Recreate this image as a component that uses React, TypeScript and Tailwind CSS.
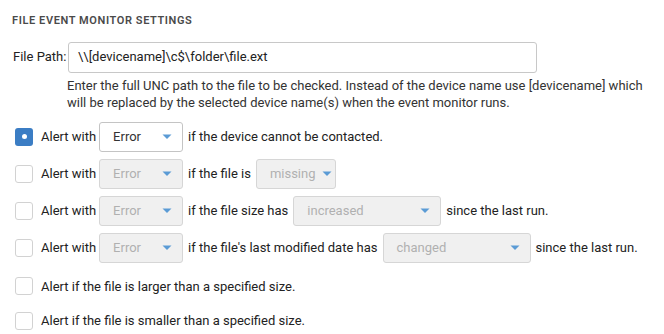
import React from "react";

const Caret = () => (
  <svg width="10" height="6" viewBox="0 0 10 6" className="shrink-0">
    <path d="M0.5 0.5 L9.5 0.5 L5 5 Z" fill="#5b9bd5" />
  </svg>
);

function Select({ value, width, disabled }: { value: string; width: number; disabled?: boolean }) {
  return (
    <div
      className={
        "flex h-[30px] items-center justify-between gap-[6px] rounded-[3px] border pl-[13px] pr-[10px] " +
        (disabled ? "border-[#d6d6d6] bg-[#f0f0f0] text-[#b0b0b0]" : "border-[#c4c4c4] bg-white text-[#333]")
      }
      style={{ width }}
    >
      <span>{value}</span>
      <Caret />
    </div>
  );
}

function Check({ checked }: { checked?: boolean }) {
  return checked ? (
    <div className="flex h-[18px] w-[18px] shrink-0 items-center justify-center rounded-[3px] bg-[#3b7dc4]">
      <div className="h-[5px] w-[5px] rounded-full bg-white" />
    </div>
  ) : (
    <div className="h-[18px] w-[18px] shrink-0 rounded-[3px] border border-[#d2d2d2] bg-white" />
  );
}

export default function App() {
  return (
    <div
      className="h-[334px] w-[664px] bg-white text-[13px] text-[#222]"
      style={{ fontFamily: "Roboto, 'Noto Sans', sans-serif" }}
    >
      <div className="pl-[12px] pt-[13px] text-[11px] font-semibold tracking-[0.6px] text-[#4a4a4a]">
        FILE EVENT MONITOR SETTINGS
      </div>
      <div className="mt-[12px] flex items-center pl-[13px]">
        <span className="w-[55px]">File Path:</span>
        <div className="flex h-[31px] w-[469px] items-center rounded-[3px] border border-[#c8c8c8] pl-[9px]">
          \\[devicename]\c$\folder\file.ext
        </div>
      </div>
      <div className="mt-[4px] pl-[67px] leading-[17px] text-[#333]">
        Enter the full UNC path to the file to be checked. Instead of the device name use [devicename] which
        <br />
        will be replaced by the selected device name(s) when the event monitor runs.
      </div>
      <div className="mt-[11px] flex flex-col gap-[7px] pl-[15px]">
        <div className="flex items-center">
          <Check checked />
          <span className="ml-[8px] mr-[3px]">Alert with</span>
          <Select value="Error" width={84} />
          <span className="ml-[5px]">if the device cannot be contacted.</span>
        </div>
        <div className="flex items-center">
          <Check />
          <span className="ml-[8px] mr-[3px]">Alert with</span>
          <Select value="Error" width={84} disabled />
          <span className="ml-[5px] mr-[5px]">if the file is</span>
          <Select value="missing" width={80} disabled />
        </div>
        <div className="flex items-center">
          <Check />
          <span className="ml-[8px] mr-[3px]">Alert with</span>
          <Select value="Error" width={84} disabled />
          <span className="ml-[5px] mr-[5px]">if the file size has</span>
          <Select value="increased" width={148} disabled />
          <span className="ml-[5px]">since the last run.</span>
        </div>
        <div className="flex items-center">
          <Check />
          <span className="ml-[8px] mr-[3px]">Alert with</span>
          <Select value="Error" width={84} disabled />
          <span className="ml-[5px] mr-[5px]">if the file's last modified date has</span>
          <Select value="changed" width={148} disabled />
          <span className="ml-[5px]">since the last run.</span>
        </div>
      </div>
      <div className="mt-[14px] flex flex-col gap-[15px] pl-[15px]">
        <div className="flex items-center">
          <Check />
          <span className="ml-[8px]">Alert if the file is larger than a specified size.</span>
        </div>
        <div className="flex items-center">
          <Check />
          <span className="ml-[8px]">Alert if the file is smaller than a specified size.</span>
        </div>
      </div>
    </div>
  );
}
